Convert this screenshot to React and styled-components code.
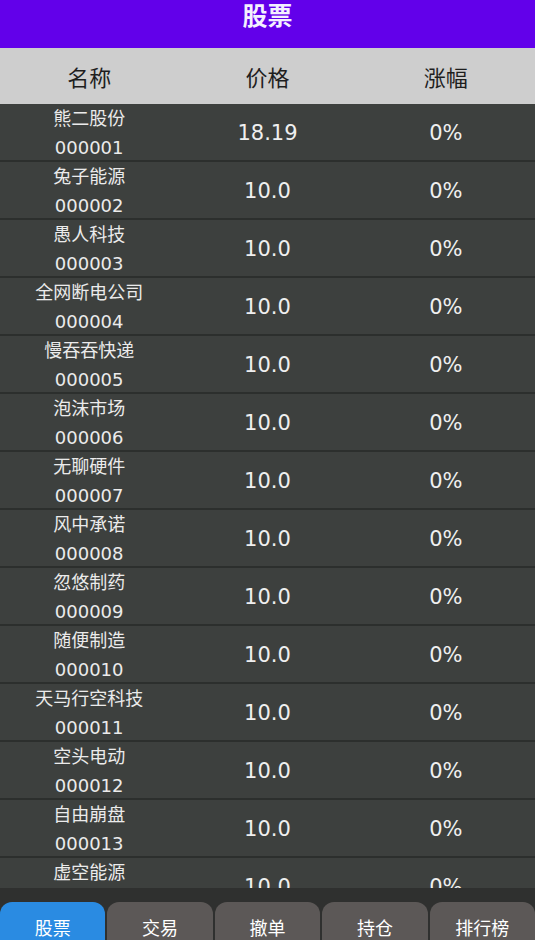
import React, { useState } from 'react';
import styled, { createGlobalStyle } from 'styled-components';

const GlobalStyle = createGlobalStyle`
  html, body {
    margin: 0;
    padding: 0;
    background: #3d403e;
  }
  * {
    box-sizing: border-box;
  }
`;

const stocks = [
  ['熊二股份', '000001', '18.19'],
  ['兔子能源', '000002', '10.0'],
  ['愚人科技', '000003', '10.0'],
  ['全网断电公司', '000004', '10.0'],
  ['慢吞吞快递', '000005', '10.0'],
  ['泡沫市场', '000006', '10.0'],
  ['无聊硬件', '000007', '10.0'],
  ['风中承诺', '000008', '10.0'],
  ['忽悠制药', '000009', '10.0'],
  ['随便制造', '000010', '10.0'],
  ['天马行空科技', '000011', '10.0'],
  ['空头电动', '000012', '10.0'],
  ['自由崩盘', '000013', '10.0'],
  ['虚空能源', '000014', '10.0'],
  ['躺平银行', '000015', '10.0'],
];

const tabs = ['股票', '交易', '撤单', '持仓', '排行榜'];

const App = () => {
  const [active, setActive] = useState(0);

  return (
    <Page>
      <GlobalStyle />
      <TopBar>股票</TopBar>
      <HeadRow>
        <HeadCell>名称</HeadCell>
        <HeadCell>价格</HeadCell>
        <HeadCell>涨幅</HeadCell>
      </HeadRow>
      <List>
        {stocks.map(([name, code, price]) => (
          <Row key={code}>
            <NameCell>
              <span>{name}</span>
              <span>{code}</span>
            </NameCell>
            <ValueCell>{price}</ValueCell>
            <ValueCell>0%</ValueCell>
          </Row>
        ))}
      </List>
      <TabBar>
        {tabs.map((t, i) => (
          <Tab key={t} $active={i === active} onClick={() => setActive(i)}>
            {t}
          </Tab>
        ))}
      </TabBar>
    </Page>
  );
};

const Page = styled.div`
  height: 940px;
  width: 100%;
  display: flex;
  flex-direction: column;
  overflow: hidden;
  font-family: 'DejaVu Sans', 'Noto Sans CJK SC', sans-serif;
  background: #3d403e;
`;

const TopBar = styled.div`
  height: 48px;
  flex-shrink: 0;
  background: #6200ea;
  color: #f4f0ff;
  font-size: 25px;
  font-weight: 700;
  text-align: center;
  line-height: 34px;
`;

const HeadRow = styled.div`
  height: 56px;
  flex-shrink: 0;
  display: grid;
  grid-template-columns: 1fr 1fr 1fr;
  align-items: center;
  background: #cecece;
`;

const HeadCell = styled.div`
  text-align: center;
  font-size: 22px;
  color: #1e1e1e;
`;

const List = styled.div`
  flex: 1;
  overflow: hidden;
`;

const Row = styled.div`
  height: 58px;
  display: grid;
  grid-template-columns: 1fr 1fr 1fr;
  align-items: center;
  background: #3d403e;
  border-bottom: 2px solid #2c2f2d;
`;

const NameCell = styled.div`
  display: flex;
  flex-direction: column;
  align-items: center;
  font-size: 18px;
  line-height: 29px;
  color: #ebebeb;
`;

const ValueCell = styled.div`
  text-align: center;
  font-size: 21px;
  color: #efefef;
`;

const TabBar = styled.div`
  height: 52px;
  flex-shrink: 0;
  overflow: hidden;
  display: flex;
  gap: 2px;
  padding-top: 14px;
  background: #2f302f;
`;

const Tab = styled.div`
  flex: 1;
  height: 54px;
  border-radius: 12px 12px 0 0;
  background: ${(p) => (p.$active ? '#2a8be2' : '#5c5857')};
  color: #fff;
  font-size: 18px;
  text-align: center;
  line-height: 54px;
  cursor: pointer;
`;

export default App;
